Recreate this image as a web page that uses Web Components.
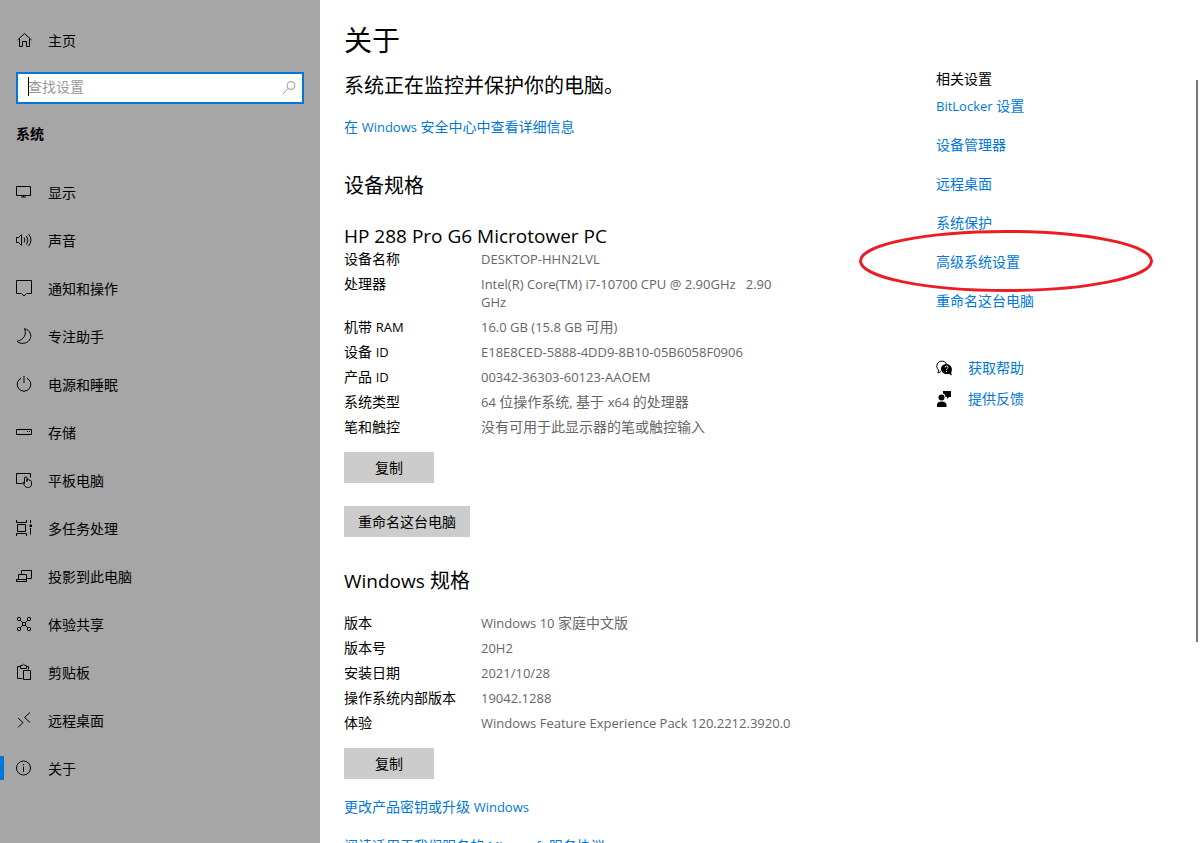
<!DOCTYPE html>
<html lang="zh-CN">
<head>
<meta charset="utf-8">
<title>设置</title>
<style>
  html, body { margin: 0; }
  body {
    font-family: "Open Sans", "Noto Sans CJK SC", sans-serif;
    font-size: 14px;
    line-height: 18px;
    color: #000;
    background: #fff;
    --accent: #0078d7;
    --muted: #666;
    --latin: 13px;
  }
</style>
</head>
<body>
<settings-window>
  <nav-item slot="home" icon="home">主页</nav-item>
  <search-box slot="search" hint="查找设置"></search-box>
  <span slot="group">系统</span>
  <nav-item slot="nav" icon="display">显示</nav-item>
  <nav-item slot="nav" icon="sound">声音</nav-item>
  <nav-item slot="nav" icon="notice">通知和操作</nav-item>
  <nav-item slot="nav" icon="moon">专注助手</nav-item>
  <nav-item slot="nav" icon="power">电源和睡眠</nav-item>
  <nav-item slot="nav" icon="storage">存储</nav-item>
  <nav-item slot="nav" icon="tablet">平板电脑</nav-item>
  <nav-item slot="nav" icon="tasks">多任务处理</nav-item>
  <nav-item slot="nav" icon="project">投影到此电脑</nav-item>
  <nav-item slot="nav" icon="share">体验共享</nav-item>
  <nav-item slot="nav" icon="clipboard">剪贴板</nav-item>
  <nav-item slot="nav" icon="remote">远程桌面</nav-item>
  <nav-item slot="nav" icon="info" current>关于</nav-item>

  <about-page></about-page>
  <related-panel slot="related"></related-panel>
</settings-window>

<script>
const ICONS = {
  home: '<path d="M1.500 8 8.500 1.500 15.500 8M3.500 6.500v8h3v-5h4v5h3v-8"/>',
  display: '<path d="M.5 2.500h14v9H.5zM7.500 11v2M5 13h5"/>',
  sound: '<path d="M.5 5.500h2L5.500 2.500v11L2.500 10.500h-2zM8 5.500q2 2.500 0 5M10.500 4q3 4 0 8.500M12.500 2q5 6 0 12"/>',
  notice: '<path d="M.5 .5h15v13h-5L8 16l-2.500-2.500h-5z"/>',
  moon: '<path d="M8.500.7C11 6 8 12 1 13.300 4.500 16.500 10.500 16 13.500 12 16.500 7.500 14 2 8.500.7z"/>',
  power: '<path d="M8 0v7M5.200 2.200a6.800 6.800 0 1 0 5.600 0"/>',
  storage: '<path d="M.5 5.500h15v5H.5z"/><path d="M11 7.500h1M13 7.500h1"/>',
  tablet: '<path d="M6.500 11.500h-6v-10h14v4M8.500 11.500V6c0-1.500 2.500-1.500 2.500 0v3.500V8c0-1.300 2.200-1 2.200.3C15 8 15.500 9 15.500 10v2c0 4.500-5.500 4.500-7 1.500L7 11c0-1 1-1 1.500.5"/>',
  tasks: '<path d="M.5 0v2.500h10V0M1.500 4.500h8v7h-8zM.5 16v-2.500h10V16M14.500 0v3M14.500 8v6.500"/><path d="M13.500 4.500h2.500v2.500h-2.500z" fill="currentColor" stroke="none"/>',
  project: '<path d="M5.500 6V2.500h10v8h-5M2.500 6.500h8v5h-8zM.5 11.500h10v2H.5z"/>',
  share: '<circle cx="3" cy="3" r="1.700"/><circle cx="13" cy="3" r="1.700"/><circle cx="3" cy="13" r="1.700"/><circle cx="13" cy="13" r="1.700"/><path d="M4.300 4.300 6.500 6.500h3L11.700 4.300M6.500 6.500v3L4.300 11.700M6.500 9.500h3l2.200 2.200M9.500 9.500v-3"/>',
  clipboard: '<path d="M6.500 14.500h-5v-12h3M10.500 2.500h2v3M4.500 1.500v3h6v-3H9Q7.500-1 6 1.500zM7.500 6.500h7v9h-7z"/>',
  remote: '<path d="M2 6 7 10.500 2 15.500M14 .5 8.500 5.500 14 10.500"/>',
  info: '<circle cx="7.500" cy="8" r="7"/><path d="M7.500 6.500V12M7.500 4v1.200"/>',
  search: '<circle cx="9" cy="5.500" r="4"/><path d="M6 8.500 1 14"/>',
  help: '<path d="M5 11.500 2 13l.5-3C-1.500 6 2 .7 6.500 1.200 9 1.500 10 3 10.500 4"/><path d="M15.800 15.500l-.6-2.900C17.500 8 14 4 10.500 4 7 4 4.800 6.500 5 9.300c.3 3.700 4.500 5.700 7.700 4.400z" fill="currentColor" stroke="none"/><path d="M9 7.500c.2-2 3.200-1.800 3 0-.1 1-1.500 1.300-1.500 2.500M10.500 11v1.200" stroke="#fff"/>',
  feedback: '<g fill="currentColor" stroke="none"><circle cx="5.500" cy="6.500" r="3"/><path d="M1 16v-2.500C1 9.500 10.500 9.500 10.500 13.500V16zM7 0h8v6h-2l-2 2V6H9.500C9.500 4 8.500 3 7 2.500z"/></g>'
};

function define(name, html, setup) {
  const template = document.createElement('template');
  template.innerHTML = html.trim();
  customElements.define(name, class extends HTMLElement {
    constructor() {
      super();
      this.attachShadow({ mode: 'open' }).append(template.content.cloneNode(true));
    }
    connectedCallback() { if (setup) setup(this, this.shadowRoot); }
  });
}

/* Latin text is set one step below the Chinese text around it. */
define('latin-run', `
  <style>:host { font-size: var(--latin); line-height: 1; }</style><slot></slot>`);

define('ui-icon', `
  <style>
    :host { display: block; flex: none; width: 16px; height: 16px; }
    svg { display: block; overflow: visible; fill: none; stroke: currentColor; stroke-width: 1; }
  </style>
  <svg width="16" height="16" viewBox="0 0 16 16" aria-hidden="true"></svg>`,
  (el, root) => { root.querySelector('svg').innerHTML = ICONS[el.getAttribute('name')] || ''; });

define('nav-item', `
  <style>
    :host { display: block; }
    a { display: flex; align-items: center; gap: 16px; height: 48px; padding: 0 16px; color: #000; text-decoration: none; position: relative; }
    ui-icon { margin-bottom: 2px; }
    :host([current]) a::before { content: ""; position: absolute; left: 0; top: 11px; width: 4px; height: 24px; background: var(--accent); }
  </style>
  <a href="#"><span><slot></slot></span></a>`,
  (el, root) => {
    const link = root.querySelector('a');
    const icon = document.createElement('ui-icon');
    icon.setAttribute('name', el.getAttribute('icon'));
    link.prepend(icon);
    if (el.hasAttribute('current')) link.setAttribute('aria-current', 'page');
  });

define('search-box', `
  <style>
    :host { display: block; }
    label { display: flex; align-items: center; box-sizing: border-box; height: 32px; padding: 0 4px 0 10px; border: 2px solid var(--accent); background: #fff; color: #999; position: relative; }
    input { flex: 1; min-width: 0; border: 0; padding: 0 0 4px; margin: 0; outline: 0; background: none; font: inherit; height: 24px; color: #000; }
    input::placeholder { color: #999; opacity: 1; }
    i { position: absolute; left: 10px; top: 3px; width: 1px; height: 19px; background: #000; }
  </style>
  <label><input type="text"><i></i><ui-icon name="search"></ui-icon></label>`,
  (el, root) => {
    const input = root.querySelector('input');
    input.placeholder = el.getAttribute('hint');
    input.setAttribute('aria-label', el.getAttribute('hint'));
  });

define('text-link', `
  <style>
    :host { display: block; }
    a { color: var(--accent); text-decoration: none; }
  </style>
  <a href="#"><slot></slot></a>`);

define('push-button', `
  <style>
    :host { display: block; }
    button { display: block; box-sizing: border-box; min-width: 90px; height: 31px; padding: 0 14px; border: 0; border-radius: 0; background: #ccc; color: #000; font: inherit; }
  </style>
  <button type="button"><slot></slot></button>`);

define('spec-list', `
  <style>
    :host { display: block; }
    dl { display: grid; gap: 7px; margin: 0; }
  </style>
  <dl><slot></slot></dl>`);

define('spec-row', `
  <style>
    :host { display: grid; grid-template-columns: 121px minmax(0, 312px); column-gap: 16px; }
    dt, dd { margin: 0; }
    dd { color: var(--muted); white-space: pre-wrap; }
  </style>
  <dt><slot name="label"></slot></dt><dd><slot></slot></dd>`);

define('about-page', `
  <style>
    :host { display: block; }
    h1, h2, h3, p { margin: 0; font-weight: 400; font-size: 20px; line-height: 28px; --latin: 19px; }
    h1 { font-size: 28px; line-height: 38px; }
    p { margin-top: 13px; }
    .security { margin-top: 18px; }
    h2 { margin-top: 36px; }
    h3 { margin-top: 22px; }
    .rename { margin-top: 23px; }
    .copy { margin-top: 16px; }
    .rename + h2 { margin-top: 30px; }
    h2 + spec-list { margin-top: 19px; }
    .after { margin-top: 19px; }
    .after + .after { margin-top: 21px; }
  </style>
  <h1>关于</h1>
  <p>系统正在监控并保护你的电脑。</p>
  <text-link class="security">在 <latin-run>Windows</latin-run> 安全中心中查看详细信息</text-link>
  <h2>设备规格</h2>
  <h3><latin-run>HP 288 Pro G6 Microtower PC</latin-run></h3>
  <spec-list>
    <spec-row><span slot="label">设备名称</span><latin-run>DESKTOP-HHN2LVL</latin-run></spec-row>
    <spec-row><span slot="label">处理器</span><latin-run>Intel(R) Core(TM) i7-10700 CPU @ 2.90GHz   2.90 GHz</latin-run></spec-row>
    <spec-row><span slot="label">机带 <latin-run>RAM</latin-run></span><latin-run>16.0 GB (15.8 GB </latin-run>可用<latin-run>)</latin-run></spec-row>
    <spec-row><span slot="label">设备 <latin-run>ID</latin-run></span><latin-run>E18E8CED-5888-4DD9-8B10-05B6058F0906</latin-run></spec-row>
    <spec-row><span slot="label">产品 <latin-run>ID</latin-run></span><latin-run>00342-36303-60123-AAOEM</latin-run></spec-row>
    <spec-row><span slot="label">系统类型</span><latin-run>64 </latin-run>位操作系统<latin-run>, </latin-run>基于 <latin-run>x64 </latin-run>的处理器</spec-row>
    <spec-row><span slot="label">笔和触控</span>没有可用于此显示器的笔或触控输入</spec-row>
  </spec-list>
  <push-button class="copy">复制</push-button>
  <push-button class="rename">重命名这台电脑</push-button>
  <h2><latin-run>Windows</latin-run> 规格</h2>
  <spec-list>
    <spec-row><span slot="label">版本</span><latin-run>Windows 10 </latin-run>家庭中文版</spec-row>
    <spec-row><span slot="label">版本号</span><latin-run>20H2</latin-run></spec-row>
    <spec-row><span slot="label">安装日期</span><latin-run>2021/10/28</latin-run></spec-row>
    <spec-row><span slot="label">操作系统内部版本</span><latin-run>19042.1288</latin-run></spec-row>
    <spec-row><span slot="label">体验</span><latin-run>Windows Feature Experience Pack 120.2212.3920.0</latin-run></spec-row>
  </spec-list>
  <push-button class="copy">复制</push-button>
  <text-link class="after">更改产品密钥或升级 <latin-run>Windows</latin-run></text-link>
  <text-link class="after">阅读适用于我们服务的 <latin-run>Microsoft</latin-run> 服务协议</text-link>`);

define('related-panel', `
  <style>
    :host { display: block; }
    h2 { margin: 0 0 9px; font-size: 14px; line-height: 18px; font-weight: 400; }
    .links { display: grid; gap: 21px; justify-items: start; }
    .marked { position: relative; }
    .marked svg { position: absolute; left: -77px; top: -23px; overflow: visible; pointer-events: none; }
    .support { display: grid; gap: 13px; margin-top: 49px; }
    .support div { display: flex; align-items: center; gap: 16px; }
  </style>
  <h2>相关设置</h2>
  <div class="links">
    <text-link><latin-run>BitLocker</latin-run> 设置</text-link>
    <text-link>设备管理器</text-link>
    <text-link>远程桌面</text-link>
    <text-link>系统保护</text-link>
    <div class="marked"><text-link>高级系统设置</text-link>
      <svg width="294" height="62" viewBox="0 0 294 62" aria-hidden="true"><ellipse cx="147" cy="31" rx="145.500" ry="29.500" fill="none" stroke="#ed1c24" stroke-width="3"/></svg>
    </div>
    <text-link>重命名这台电脑</text-link>
  </div>
  <div class="support">
    <div><ui-icon name="help"></ui-icon><text-link>获取帮助</text-link></div>
    <div><ui-icon name="feedback"></ui-icon><text-link>提供反馈</text-link></div>
  </div>`);

define('settings-window', `
  <style>
    :host { display: grid; grid-template-columns: 320px minmax(0, 1fr); height: 100vh; overflow: hidden; position: relative; }
    nav { background: #a6a6a6; padding-top: 17px; overflow: hidden; }
    .search { margin: 7px 16px 0; }
    h2 { margin: 21px 16px 26px; font-size: 14px; line-height: 18px; font-weight: 700; }
    main { display: grid; grid-template-columns: minmax(0, 1fr) 240px; align-items: start; gap: 24px; padding: 21px 24px 0; overflow: hidden; }
    aside { padding-top: 49px; }
    .thumb { position: absolute; right: 2px; top: 80px; width: 2px; height: 562px; background: #767676; }
  </style>
  <nav>
    <slot name="home"></slot>
    <div class="search"><slot name="search"></slot></div>
    <h2><slot name="group"></slot></h2>
    <slot name="nav"></slot>
  </nav>
  <main><slot></slot><aside><slot name="related"></slot></aside></main>
  <div class="thumb"></div>`);
</script>
</body>
</html>
